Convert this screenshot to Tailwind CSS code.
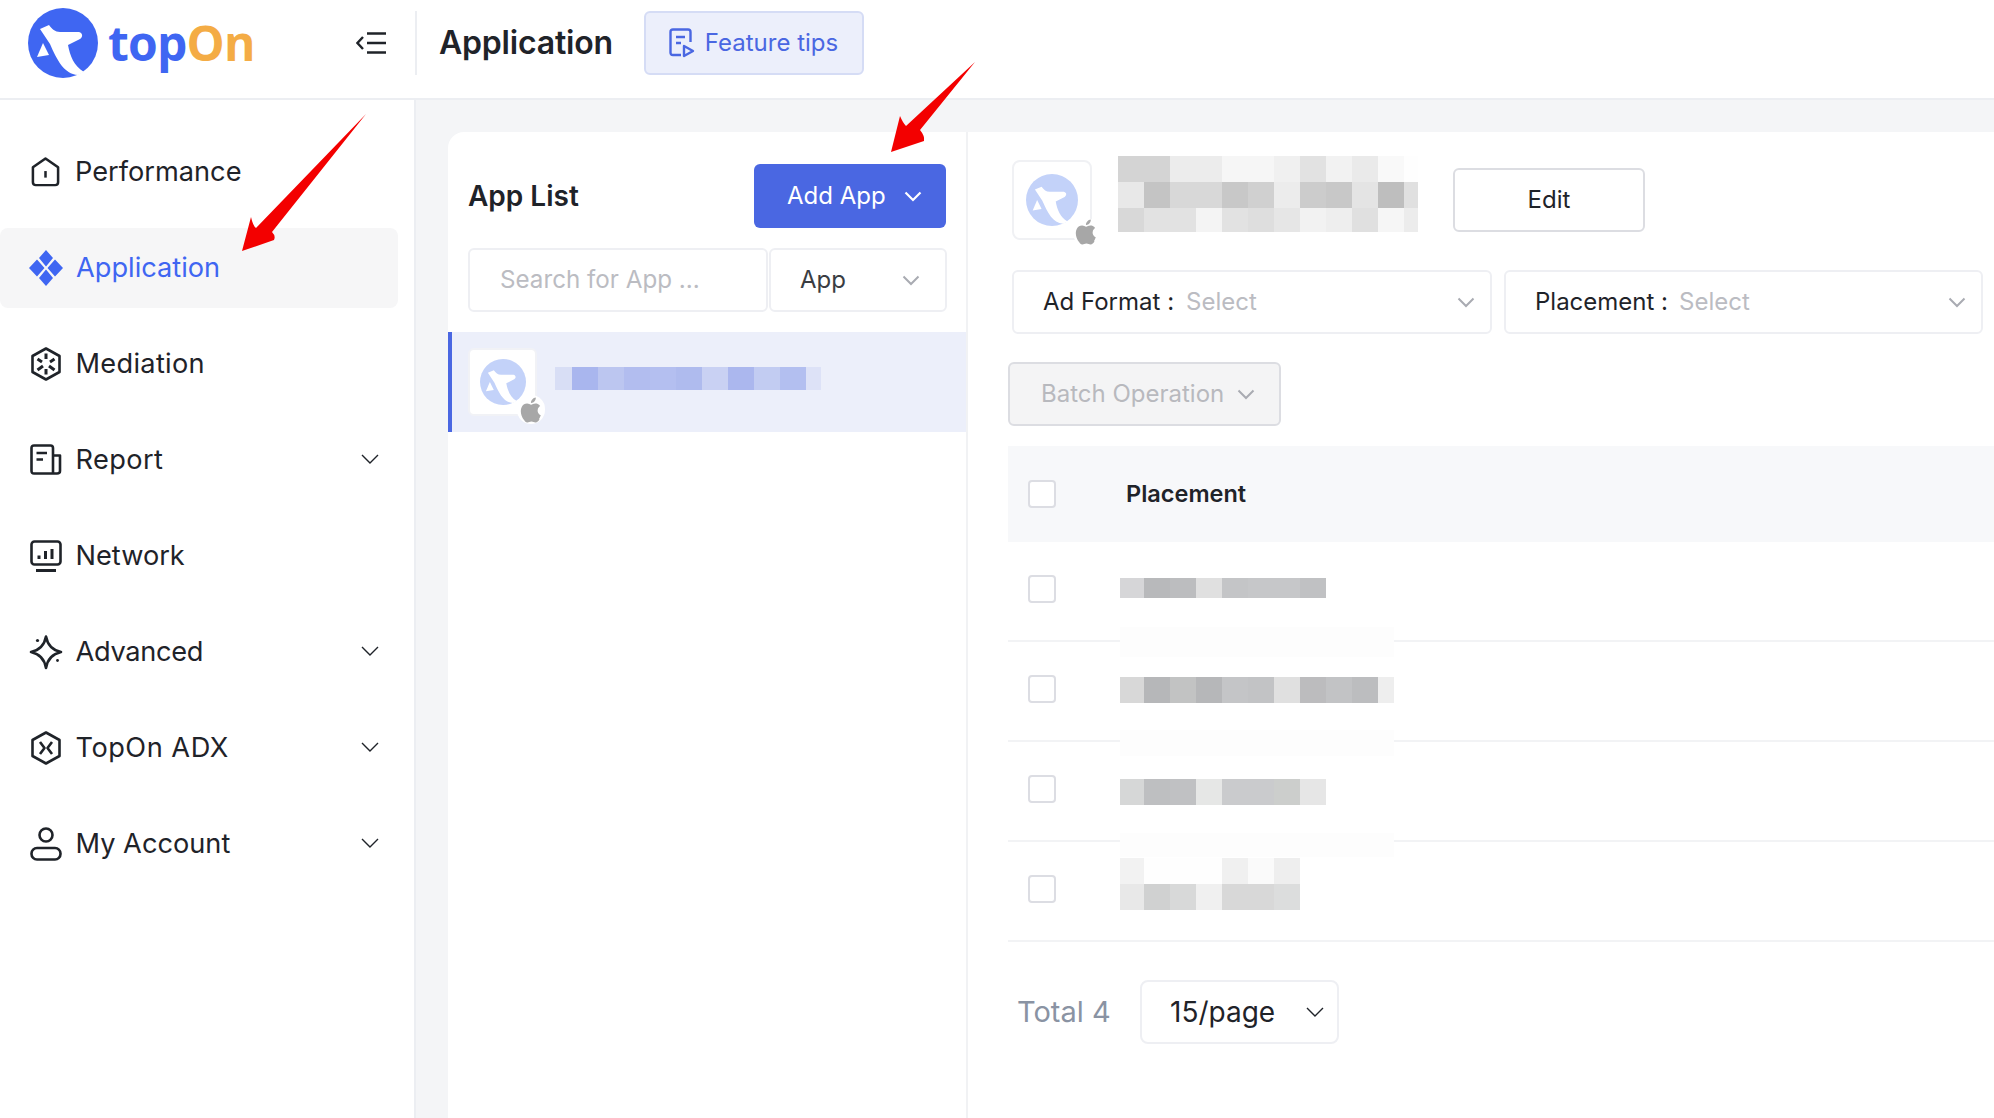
<!doctype html>
<html>
<head>
<meta charset="utf-8">
<script src="https://cdn.jsdelivr.net/npm/@tailwindcss/browser@4"></script>
</head>
<body class="m-0 bg-white">
<div class="relative w-[1994px] h-[1118px] overflow-hidden flex flex-col bg-white font-['Inter','Liberation_Sans',sans-serif] text-[#1f2329]">

  <!-- header -->
  <header class="h-[100px] shrink-0 border-b-2 border-[#eceef2] flex items-center">
    <div class="w-[356px] shrink-0 pl-[28px] flex items-center h-full pb-[12px]">
      <svg class="w-[70px] h-[70px]" viewBox="28 8 70 70">
        <circle cx="63" cy="43" r="35" fill="#3f66f2"/>
        <path d="M40 29 L49 25 C52 29 55 32 60 32 L79 32 C83 33 83 37 80 39 L68 45 C70 56 74 66 84 72 L78 75 C64 74 57 60 50 44 Z" fill="#fff"/>
        <path d="M37 57 L43 43 L49 55 Z" fill="#fff"/>
      </svg>
      <span class="ml-[10px] text-[48px] leading-none font-bold tracking-[-0.8px] font-['Open_Sans',sans-serif]"><span class="text-[#3f66f2]">top</span><span class="text-[#f4ac45]">On</span></span>
    </div>
    <div class="w-[59px] shrink-0 h-full flex items-center pb-[12px]">
      <svg class="w-[32px] h-[24px]" viewBox="0 0 32 24" fill="none" stroke="#1f2329" stroke-width="2.4">
        <path d="M7 6 L1.5 12 L7 18"/><path d="M11 2.5 H30 M11 12 H30 M11 21.5 H30"/>
      </svg>
    </div>
    <div class="h-[64px] w-[2px] bg-[#eceef2] -mt-[12px]"></div>
    <h1 class="ml-[22px] text-[32px] leading-none font-semibold -mt-[12px] tracking-[-0.2px]">Application</h1>
    <div class="ml-[31px] -mt-[12px] w-[220px] h-[64px] rounded-[6px] border-2 border-[#d5dcf5] bg-[#eceffb] flex items-center pl-[23px] text-[#4a67e2] text-[24px]">
      <svg class="w-[26px] h-[30px] shrink-0" viewBox="0 0 26 30" fill="none" stroke="#4a67e2" stroke-width="2.4" stroke-linejoin="round">
        <path d="M12 27 H4 Q1.5 27 1.5 24.500 V4 Q1.500 1.500 4 1.500 H19 Q21.500 1.500 21.500 4 V14"/>
        <path d="M7 9 H16 M7 15 H12"/>
        <path d="M15 18 L24 23 L15 28 Z"/>
      </svg>
      <span class="ml-[10px]">Feature tips</span>
    </div>
  </header>

  <div class="flex-1 flex min-h-0">
    <!-- sidebar -->
    <aside class="w-[416px] shrink-0 border-r-2 border-[#eceef2] pr-[16px] pt-[32px] flex flex-col gap-[16px] text-[27.2px]">
      <div class="h-[80px] flex items-center pl-[30px]">
        <svg class="w-[31px] h-[30px] shrink-0" viewBox="0 0 32 32" preserveAspectRatio="none" fill="none" stroke="#1f2329" stroke-width="2.6" stroke-linejoin="round"><path d="M3 11 L16 1.500 L29 11 V27 Q29 30 26 30 H6 Q3 30 3 27 Z"/><path d="M16 15 V22"/></svg>
        <span class="ml-[14px] mt-[1px]">Performance</span>
      </div>
      <div class="h-[80px] flex items-center pl-[29px] bg-[#f6f6f7] rounded-[8px] text-[#3f66f2]">
        <svg class="w-[34px] h-[36px] shrink-0" viewBox="0 0 34 36" fill="#3f66f2"><path d="M17 0 L24 8 L17 16.500 L10 8 Z M8 9.500 L15.500 18 L8 26.500 L0 18 Z M26 9.500 L34 18 L26 26.500 L18.500 18 Z M17 19.500 L24 28 L17 36 L10 28 Z"/></svg>
        <span class="ml-[13px] mt-[1px]">Application</span>
      </div>
      <div class="h-[80px] flex items-center pl-[30px]">
        <svg class="w-[32px] h-[34px] shrink-0" viewBox="0 0 32 34" fill="none" stroke="#1f2329" stroke-width="2.6" stroke-linejoin="round"><path d="M16 1.500 L29.500 9 V25 L16 32.500 L2.500 25 V9 Z"/><path d="M16 6.500 V12 M16 22 V27.500 M7.500 12 L12 15 M24.500 12 L20 15 M7.500 23 L13 19 M24.500 23 L19 19" stroke-width="3"/></svg>
        <span class="ml-[13.500px] mt-[1px] tracking-[0.3px]">Mediation</span>
      </div>
      <div class="h-[80px] flex items-center pl-[30px]">
        <svg class="w-[32px] h-[32px] shrink-0" viewBox="0 0 32 32" fill="none" stroke="#1f2329" stroke-width="2.6" stroke-linejoin="round"><path d="M23 29.500 H4 Q1.500 29.500 1.500 27 V4 Q1.500 1.500 4 1.500 H20.500 Q23 1.500 23 4 V29.500 H27 Q30 29.500 30 27 V11.500 H23"/><path d="M6.500 9 H17 M6.500 15.500 H13"/></svg>
        <span class="ml-[13.500px] mt-[1px] tracking-[0.4px]">Report</span>
        <svg class="ml-auto mr-[19px] -mt-[3px] w-[18px] h-[10px]" viewBox="0 0 18 10" fill="none" stroke="#1f2329" stroke-width="1.400"><path d="M1 1 L9 9 L17 1"/></svg>
      </div>
      <div class="h-[80px] flex items-center pl-[30px]">
        <svg class="w-[32px] h-[32px] shrink-0" viewBox="0 0 32 32" fill="none" stroke="#1f2329" stroke-width="2.6" stroke-linejoin="round"><rect x="1.500" y="1.500" width="29" height="23" rx="3"/><path d="M6 30.500 H26" stroke-width="3"/><path d="M9 19 V15.500 M15.500 19 V11 M22 19 V9" stroke-width="3"/></svg>
        <span class="ml-[13.500px] mt-[1px]">Network</span>
      </div>
      <div class="h-[80px] flex items-center pl-[28px]">
        <svg class="w-[36px] h-[36px] shrink-0" viewBox="0 0 36 36" fill="none" stroke="#1f2329" stroke-width="2.6" stroke-linejoin="round"><path d="M18 2.500 C19.500 11 24 16 33 18 C24 20 19.500 25 18 34 C16.500 25 12 20 3 18 C12 16 16.500 11 18 2.500 Z"/><circle cx="9.500" cy="6.500" r="1.600" fill="#1f2329" stroke="none"/><circle cx="29.500" cy="26.500" r="1.400" fill="#1f2329" stroke="none"/></svg>
        <span class="ml-[11.500px] mt-[1px] tracking-[-0.3px]">Advanced</span>
        <svg class="ml-auto mr-[19px] -mt-[3px] w-[18px] h-[10px]" viewBox="0 0 18 10" fill="none" stroke="#1f2329" stroke-width="1.400"><path d="M1 1 L9 9 L17 1"/></svg>
      </div>
      <div class="h-[80px] flex items-center pl-[30px]">
        <svg class="w-[32px] h-[34px] shrink-0" viewBox="0 0 32 34" fill="none" stroke="#1f2329" stroke-width="2.6" stroke-linejoin="round"><path d="M16 1.500 L29.500 9 V25 L16 32.500 L2.500 25 V9 Z"/><path d="M10 11 L14.500 17 L10 23 M22 11 L17.500 17 L22 23"/></svg>
        <span class="ml-[13.500px] mt-[1px] tracking-[0.5px]">TopOn ADX</span>
        <svg class="ml-auto mr-[19px] -mt-[3px] w-[18px] h-[10px]" viewBox="0 0 18 10" fill="none" stroke="#1f2329" stroke-width="1.400"><path d="M1 1 L9 9 L17 1"/></svg>
      </div>
      <div class="h-[80px] flex items-center pl-[30px]">
        <svg class="w-[32px] h-[34px] shrink-0" viewBox="0 0 32 34" fill="none" stroke="#1f2329" stroke-width="2.6" stroke-linejoin="round"><circle cx="16" cy="8" r="6.500"/><rect x="1.500" y="21" width="29" height="11.500" rx="5.500"/></svg>
        <span class="ml-[13.500px] mt-[1px]">My Account</span>
        <svg class="ml-auto mr-[19px] -mt-[3px] w-[18px] h-[10px]" viewBox="0 0 18 10" fill="none" stroke="#1f2329" stroke-width="1.400"><path d="M1 1 L9 9 L17 1"/></svg>
      </div>
    </aside>

    <!-- main -->
    <main class="flex-1 bg-[#f4f5f7] pl-[32px] pt-[32px] min-w-0">
      <div class="h-full rounded-tl-[16px] bg-white flex overflow-hidden">
        <!-- app list -->
        <section class="w-[520px] shrink-0 border-r-2 border-[#f1f2f4] pt-[32px]">
          <div class="flex items-center justify-between pl-[20px] pr-[20px] h-[64px]">
            <h2 class="text-[28px] font-semibold">App List</h2>
            <div class="w-[192px] h-[64px] rounded-[6px] bg-[#4a67e2] text-white text-[24px] flex items-center pl-[33px]">
              <span>Add App</span>
              <svg class="ml-[18px] w-[18px] h-[11px]" viewBox="0 0 18 11" fill="none" stroke="#fff" stroke-width="2.200"><path d="M1.500 1.500 L9 9 L16.500 1.500"/></svg>
            </div>
          </div>
          <div class="flex pl-[20px] mt-[20px] h-[64px] text-[24.200px]">
            <div class="w-[300px] rounded-[6px] border-2 border-[#eeeff3] flex items-center pl-[30px] text-[#bbbcc2]">Search for App ...</div>
            <div class="ml-[1px] w-[178px] rounded-[6px] border-2 border-[#eeeff3] flex items-center pl-[29px] text-[#3a3d42]">
              <span class="text-[24px]">App</span>
              <svg class="ml-auto mr-[25px] w-[18px] h-[11px]" viewBox="0 0 18 11" fill="none" stroke="#a9abb2" stroke-width="2"><path d="M1.500 1.500 L9 9 L16.500 1.500"/></svg>
            </div>
          </div>
          <div class="mt-[20px] h-[100px] bg-[#eceffa] border-l-4 border-[#4a67e2] flex pl-[16px] pt-[16px]">
            <div class="relative w-[69px] h-[68px] rounded-[6px] bg-white border-2 border-[#f1f2f6] flex items-center justify-center">
              <svg class="w-[46px] h-[46px]" viewBox="28 8 70 70">
                <circle cx="63" cy="43" r="35" fill="#c3d2f9"/>
                <path d="M40 29 L49 25 C52 29 55 32 60 32 L79 32 C83 33 83 37 80 39 L68 45 C70 56 74 66 84 72 L78 75 C64 74 57 60 50 44 Z" fill="#fff"/>
                <path d="M37 57 L43 43 L49 55 Z" fill="#fff"/>
              </svg>
              <div class="absolute -right-[10px] -bottom-[10px] w-[28px] h-[29px] rounded-full bg-white flex items-center justify-center">
                <svg class="w-[30px] h-[30px] shrink-0" viewBox="0 0 24 24" fill="#a7a7a7"><path d="M18.710 19.500c-.83 1.240-1.710 2.450-3.050 2.470-1.340.03-1.770-.79-3.290-.79-1.530 0-2 .77-3.270.82-1.310.05-2.300-1.320-3.140-2.530C4.250 17 2.940 12.450 4.700 9.390c.87-1.520 2.430-2.480 4.120-2.510 1.280-.02 2.500.87 3.290.87.78 0 2.260-1.070 3.750-.91.62.03 2.370.25 3.490 1.890-.09.06-2.080 1.220-2.060 3.630.03 2.880 2.520 3.840 2.550 3.850-.03.07-.4 1.370-1.310 2.710M13 3.500c.69-.83 1.860-1.450 2.830-1.500.12 1.120-.33 2.250-1 3.060-.67.81-1.770 1.440-2.850 1.350-.13-1.100.4-2.250 1.020-2.910z"/></svg>
              </div>
            </div>
            <div class="ml-[18px] mt-[19px] h-[23px] flex">
              <div class="w-[17px] bg-[#d8def5]"></div><div class="w-[26px] bg-[#a9b6ee]"></div><div class="w-[26px] bg-[#bcc6f0]"></div><div class="w-[26px] bg-[#b2bdef]"></div><div class="w-[26px] bg-[#b4bff0]"></div><div class="w-[26px] bg-[#afbbee]"></div><div class="w-[26px] bg-[#c9d1f3]"></div><div class="w-[26px] bg-[#abb7ee]"></div><div class="w-[26px] bg-[#c2ccf2]"></div><div class="w-[26px] bg-[#b3bff0]"></div><div class="w-[15px] bg-[#dde2f7]"></div>
            </div>
          </div>
        </section>

        <!-- detail -->
        <section class="flex-1 min-w-0 relative pl-[40px] text-[24px]">
          <div class="flex items-start pl-[4px] pt-[24px] h-[130px]">
            <div class="relative w-[80px] h-[80px] mt-[4px] rounded-[8px] bg-white border-2 border-[#f0f1f4] flex items-center justify-center">
              <svg class="w-[52px] h-[54px]" viewBox="28 8 70 70">
                <circle cx="63" cy="43" r="35" fill="#c3d2f9"/>
                <path d="M40 29 L49 25 C52 29 55 32 60 32 L79 32 C83 33 83 37 80 39 L68 45 C70 56 74 66 84 72 L78 75 C64 74 57 60 50 44 Z" fill="#fff"/>
                <path d="M37 57 L43 43 L49 55 Z" fill="#fff"/>
              </svg>
              <div class="absolute -right-[9px] -bottom-[8px] w-[26px] h-[28px] rounded-full bg-white flex items-center justify-center">
                <svg class="w-[30px] h-[30px] shrink-0" viewBox="0 0 24 24" fill="#a7a7a7"><path d="M18.710 19.500c-.83 1.240-1.710 2.450-3.050 2.470-1.340.03-1.770-.79-3.290-.79-1.530 0-2 .77-3.270.82-1.310.05-2.300-1.320-3.140-2.530C4.250 17 2.940 12.450 4.700 9.390c.87-1.520 2.430-2.480 4.120-2.510 1.280-.02 2.500.87 3.290.87.78 0 2.260-1.070 3.750-.91.62.03 2.370.25 3.490 1.890-.09.06-2.080 1.220-2.060 3.630.03 2.880 2.520 3.840 2.550 3.850-.03.07-.4 1.370-1.310 2.710M13 3.500c.69-.83 1.860-1.450 2.830-1.500.12 1.120-.33 2.250-1 3.060-.67.81-1.770 1.440-2.850 1.350-.13-1.100.4-2.250 1.020-2.910z"/></svg>
              </div>
            </div>
            <div class="ml-[26px] w-[300px] grid grid-cols-[repeat(11,26px)_14px] grid-rows-[26px_26px_24px]">
              <div class="bg-[#d4d4d4]"></div><div class="bg-[#d4d4d4]"></div><div class="bg-[#ececec]"></div><div class="bg-[#ececec]"></div><div class="bg-[#f6f6f6]"></div><div class="bg-[#f6f6f6]"></div><div class="bg-[#f0f0f0]"></div><div class="bg-[#e2e2e2]"></div><div class="bg-[#f2f2f2]"></div><div class="bg-[#eaeaea]"></div><div class="bg-[#f9f9f9]"></div><div class="bg-[#fefefe]"></div>
              <div class="bg-[#e8e8e8]"></div><div class="bg-[#c4c4c4]"></div><div class="bg-[#d8d8d8]"></div><div class="bg-[#d8d8d8]"></div><div class="bg-[#c8c8c8]"></div><div class="bg-[#d0d0d0]"></div><div class="bg-[#ececec]"></div><div class="bg-[#cccccc]"></div><div class="bg-[#c8c8c8]"></div><div class="bg-[#e4e4e4]"></div><div class="bg-[#bebebe]"></div><div class="bg-[#e0e0e0]"></div>
              <div class="bg-[#d8d8d8]"></div><div class="bg-[#e2e2e2]"></div><div class="bg-[#e2e2e2]"></div><div class="bg-[#f4f4f4]"></div><div class="bg-[#e2e2e2]"></div><div class="bg-[#dedede]"></div><div class="bg-[#e6e6e6]"></div><div class="bg-[#f2f2f2]"></div><div class="bg-[#eeeeee]"></div><div class="bg-[#e0e0e0]"></div><div class="bg-[#f6f6f6]"></div><div class="bg-[#ececec]"></div>
            </div>
            <div class="ml-[35px] mt-[12px] w-[192px] h-[64px] rounded-[6px] border-2 border-[#dcdde2] flex items-center justify-center">Edit</div>
          </div>
          <div class="flex gap-[12px] pl-[4px] mt-[8px]">
            <div class="w-[480px] h-[64px] rounded-[6px] border-2 border-[#eeeff3] flex items-center pl-[29px]">
              <span>Ad Format :</span><span class="ml-[12px] text-[#bbbcc2]">Select</span>
              <svg class="ml-auto mr-[15px] w-[18px] h-[11px]" viewBox="0 0 18 11" fill="none" stroke="#a9abb2" stroke-width="2"><path d="M1.500 1.500 L9 9 L16.500 1.500"/></svg>
            </div>
            <div class="w-[479px] h-[64px] rounded-[6px] border-2 border-[#eeeff3] flex items-center pl-[29px]">
              <span>Placement :</span><span class="ml-[11px] text-[#bbbcc2]">Select</span>
              <svg class="ml-auto mr-[15px] w-[18px] h-[11px]" viewBox="0 0 18 11" fill="none" stroke="#a9abb2" stroke-width="2"><path d="M1.500 1.500 L9 9 L16.500 1.500"/></svg>
            </div>
          </div>
          <div class="mt-[28px] w-[273px] h-[64px] rounded-[6px] border-2 border-[#dcdde2] bg-[#f4f4f5] flex items-center pl-[31px] text-[#b8b9be]">
            <span>Batch Operation</span>
            <svg class="ml-[13px] w-[18px] h-[11px]" viewBox="0 0 18 11" fill="none" stroke="#a9abb2" stroke-width="2"><path d="M1.500 1.500 L9 9 L16.500 1.500"/></svg>
          </div>

          <!-- table -->
          <div class="relative mt-[20px]">
            <div class="h-[96px] bg-[#f7f8fa] flex items-center pl-[20px]">
              <div class="w-[28px] h-[28px] rounded-[4px] border-2 border-[#dcdde3] bg-white"></div>
              <span class="ml-[70px] font-semibold text-[23.500px]">Placement</span>
            </div>
            <div class="h-[100px] pb-[4px] border-b-2 border-[#f2f3f5] flex items-center pl-[20px]">
              <div class="w-[28px] h-[28px] rounded-[4px] border-2 border-[#dcdde3] mr-[64px]"></div>
              <div class="flex h-[20px] -mt-[2px]"><div class="w-[24px] bg-[#d6d6d8]"></div><div class="w-[26px] bg-[#b8b9bb]"></div><div class="w-[26px] bg-[#bcbdbf]"></div><div class="w-[26px] bg-[#e0e0e0]"></div><div class="w-[26px] bg-[#c4c5c7]"></div><div class="w-[26px] bg-[#c6c7c9]"></div><div class="w-[26px] bg-[#c6c7c9]"></div><div class="w-[26px] bg-[#c0c1c3]"></div></div>
            </div>
            <div class="h-[100px] pb-[4px] border-b-2 border-[#f2f3f5] flex items-center pl-[20px]">
              <div class="w-[28px] h-[28px] rounded-[4px] border-2 border-[#dcdde3] mr-[64px]"></div>
              <div class="flex h-[26px] mt-[1px]"><div class="w-[24px] bg-[#d8d8d8]"></div><div class="w-[26px] bg-[#b6b7b9]"></div><div class="w-[26px] bg-[#c2c3c3]"></div><div class="w-[26px] bg-[#b6b7b9]"></div><div class="w-[26px] bg-[#c4c5c7]"></div><div class="w-[26px] bg-[#c2c3c5]"></div><div class="w-[26px] bg-[#e0e0e0]"></div><div class="w-[26px] bg-[#bcbcbe]"></div><div class="w-[26px] bg-[#c2c3c5]"></div><div class="w-[26px] bg-[#bcbdbf]"></div><div class="w-[16px] bg-[#eeeeee]"></div></div>
            </div>
            <div class="h-[100px] pb-[4px] border-b-2 border-[#f2f3f5] flex items-center pl-[20px]">
              <div class="w-[28px] h-[28px] rounded-[4px] border-2 border-[#dcdde3] mr-[64px]"></div>
              <div class="flex h-[26px] mt-[6px]"><div class="w-[24px] bg-[#d6d7d7]"></div><div class="w-[26px] bg-[#bebfc1]"></div><div class="w-[26px] bg-[#c0c1c3]"></div><div class="w-[26px] bg-[#e6e7e6]"></div><div class="w-[26px] bg-[#cacbcd]"></div><div class="w-[26px] bg-[#cacbcd]"></div><div class="w-[26px] bg-[#cccecc]"></div><div class="w-[26px] bg-[#e6e6e6]"></div></div>
            </div>
            <div class="h-[100px] pb-[4px] border-b-2 border-[#f2f3f5] flex items-center pl-[20px]">
              <div class="w-[28px] h-[28px] rounded-[4px] border-2 border-[#dcdde3] mr-[64px]"></div>
              <div class="-mt-[10px] grid grid-cols-[24px_26px_26px_26px_26px_26px_26px] auto-rows-[26px]">
                <div class="bg-[#f2f2f2]"></div><div class="bg-[#fefefe]"></div><div class="bg-[#fefefe]"></div><div class="bg-[#fefefe]"></div><div class="bg-[#f0f0f0]"></div><div class="bg-[#fafafa]"></div><div class="bg-[#eeeeee]"></div>
                <div class="bg-[#e8e8e8]"></div><div class="bg-[#d0d1d1]"></div><div class="bg-[#d8d9d9]"></div><div class="bg-[#f0f0f0]"></div><div class="bg-[#d8d8d8]"></div><div class="bg-[#d8d8d8]"></div><div class="bg-[#dcdddd]"></div>
              </div>
            </div>
            <!-- mosaic patches over the row lines -->
            <div class="absolute left-[112px] top-[181px] w-[274px] h-[30px] bg-[#fdfdfd]"></div>
            <div class="absolute left-[112px] top-[284px] w-[274px] h-[26px] bg-[#fdfdfd]"></div>
            <div class="absolute left-[112px] top-[387px] w-[274px] h-[24px] bg-[#fdfdfd]"></div>
          </div>

          <!-- pagination -->
          <div class="flex items-center mt-[38px] pl-[9px]">
            <span class="text-[#8a93a3] text-[29px] w-[123px]">Total 4</span>
            <div class="w-[199px] h-[64px] rounded-[8px] border-2 border-[#eeeff3] flex items-center pl-[28px] text-[28px]">
              <span>15/page</span>
              <svg class="ml-auto mr-[13px] w-[18px] h-[10px]" viewBox="0 0 18 10" fill="none" stroke="#1f2329" stroke-width="1.400"><path d="M1 1 L9 9 L17 1"/></svg>
            </div>
          </div>
        </section>
      </div>
    </main>
  </div>

  <!-- annotation arrows -->
  <svg class="absolute left-0 top-0 pointer-events-none" width="1994" height="300" viewBox="0 0 1994 300">
    <path d="M366 114 L272 232 Q276 236 274 240 L242 251 L251 217 Q253 226 256 228 Z" fill="#f30000"/>
    <path d="M975 62 L920 130 Q925 136 924 141 L891 152 L900 116 Q903 123 906 126 Z" fill="#f30000"/>
  </svg>
</div>
</body>
</html>
